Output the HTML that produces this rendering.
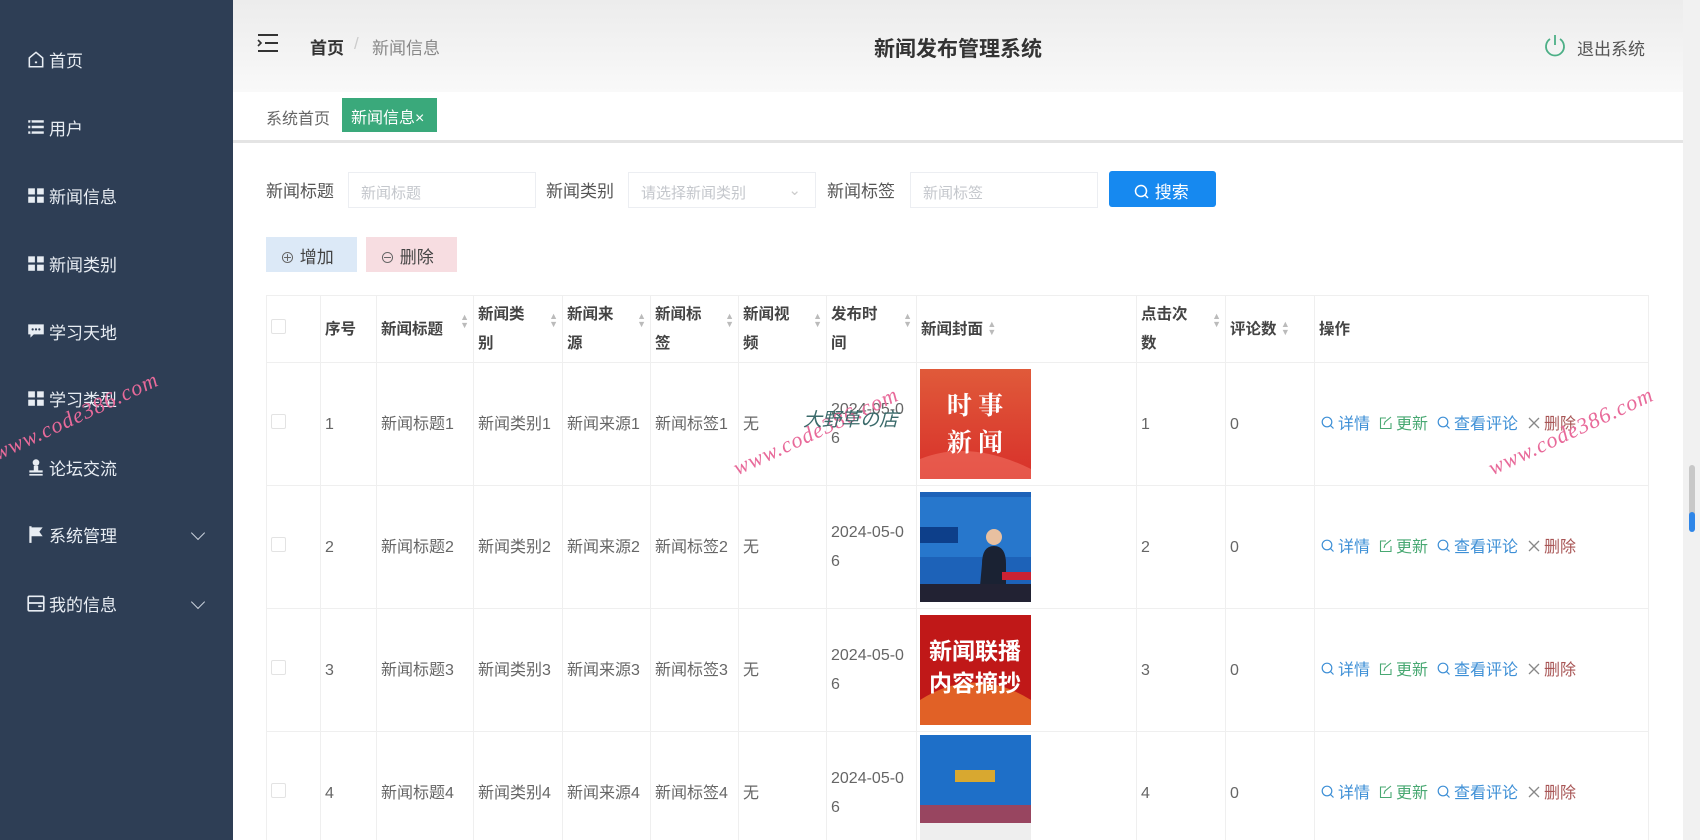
<!DOCTYPE html>
<html><head><meta charset="utf-8"><style>
*{margin:0;padding:0;box-sizing:border-box}
html,body{width:1700px;height:840px;overflow:hidden}
body{background:#fff;font-family:"Liberation Sans","Noto Sans CJK SC",sans-serif;color:#555;position:relative}
.side{position:absolute;left:0;top:0;width:233px;height:840px;background:#2e3e55}
.mi{position:absolute;left:26px;color:#e8edf3;font-size:17px;display:flex;align-items:center;gap:3px;height:24px}
.mi svg{width:20px;height:20px}
.arr{position:absolute;left:193px;width:10px;height:10px;border-right:1.5px solid #c9d1dc;border-bottom:1.5px solid #c9d1dc;transform:rotate(45deg)}
.head{position:absolute;left:233px;top:0;width:1450px;height:92px;background:linear-gradient(#ececec,#f9f9f9)}
.tabs{position:absolute;left:233px;top:92px;width:1450px;height:51px;background:#fff;border-bottom:3px solid #e4e4e4}
.abs{position:absolute}
.inp{position:absolute;top:172px;height:36px;border:1px solid #eceef2;background:#fff;color:#c4c7cc;font-size:15px;padding:9px 12px}
.lbl{position:absolute;top:177px;font-size:17px;color:#555}
table{position:absolute;left:266px;top:295px;border-collapse:collapse;table-layout:fixed;width:1382px}
td,th{border:1px solid #efefef;font-size:16px;padding:0 4px;vertical-align:middle;text-align:left;line-height:29px}
th{font-weight:bold;color:#444;height:67px;font-size:15.5px}
td{height:123px;color:#666}
.srt{float:right;font-size:9px;color:#bbb;line-height:8px;margin-top:-2px;display:inline-block}
.cb{width:15px;height:15px;border:1px solid #e3e3e3;border-radius:2px;display:inline-block}
.img{width:111px;height:110px;display:block;margin-left:-1px}
.op{font-size:16px;white-space:nowrap;padding-left:6px}
.op span{margin-right:9px}
.op svg{vertical-align:-1px;margin-right:3px}
.wm{position:absolute;color:#e86a9a;font-family:"Liberation Serif",serif;font-size:22px;font-style:italic;transform:rotate(-25deg);transform-origin:left bottom;letter-spacing:1px}
</style></head><body>
<div class="side">
 <div class="mi" style="top:47px"><svg viewBox="0 0 18 18"><path d="M3 8L9 3l6 5v8H3z" fill="none" stroke="#e8edf3" stroke-width="1.4"/><path d="M8 12h2" stroke="#e8edf3" stroke-width="1.6"/></svg>首页</div>
 <div class="mi" style="top:115px"><svg viewBox="0 0 18 18"><path d="M2 4h14M2 9h14M2 14h14" stroke="#e8edf3" stroke-width="2.2"/><path d="M4.5 3v12" stroke="#2e3e55" stroke-width="1.2"/></svg>用户</div>
 <div class="mi" style="top:183px"><svg viewBox="0 0 18 18"><rect x="2" y="3" width="6" height="5.5" fill="#e8edf3"/><rect x="10" y="3" width="6" height="5.5" fill="#e8edf3"/><rect x="2" y="10.5" width="6" height="5.5" fill="#e8edf3"/><rect x="10" y="10.5" width="6" height="5.5" fill="#e8edf3"/></svg>新闻信息</div>
 <div class="mi" style="top:251px"><svg viewBox="0 0 18 18"><rect x="2" y="3" width="6" height="5.5" fill="#e8edf3"/><rect x="10" y="3" width="6" height="5.5" fill="#e8edf3"/><rect x="2" y="10.5" width="6" height="5.5" fill="#e8edf3"/><rect x="10" y="10.5" width="6" height="5.5" fill="#e8edf3"/></svg>新闻类别</div>
 <div class="mi" style="top:319px"><svg viewBox="0 0 18 18"><path d="M2 3h14v9H7l-3 3v-3H2z" fill="#e8edf3"/><circle cx="6" cy="7.5" r="1" fill="#2e3e55"/><circle cx="9" cy="7.5" r="1" fill="#2e3e55"/><circle cx="12" cy="7.5" r="1" fill="#2e3e55"/></svg>学习天地</div>
 <div class="mi" style="top:386px"><svg viewBox="0 0 18 18"><rect x="2" y="3" width="6" height="5.5" fill="#e8edf3"/><rect x="10" y="3" width="6" height="5.5" fill="#e8edf3"/><rect x="2" y="10.5" width="6" height="5.5" fill="#e8edf3"/><rect x="10" y="10.5" width="6" height="5.5" fill="#e8edf3"/></svg>学习类型</div>
 <div class="mi" style="top:455px"><svg viewBox="0 0 18 18"><circle cx="9" cy="5" r="3" fill="#e8edf3"/><path d="M7 8h4v4h4v2H3v-2h4z" fill="#e8edf3"/><path d="M3 16h12" stroke="#e8edf3" stroke-width="1.5"/></svg>论坛交流</div>
 <div class="mi" style="top:522px"><svg viewBox="0 0 18 18"><path d="M4 2v15" stroke="#e8edf3" stroke-width="2"/><path d="M4 3h11l-3 4 3 4H4z" fill="#e8edf3"/></svg>系统管理</div>
 <div class="arr" style="top:528px"></div>
 <div class="mi" style="top:591px"><svg viewBox="0 0 18 18"><rect x="2" y="3" width="14" height="13" rx="1" fill="none" stroke="#e8edf3" stroke-width="1.5"/><path d="M2 9h14M11 12h3" stroke="#e8edf3" stroke-width="1.5"/></svg>我的信息</div>
 <div class="arr" style="top:597px"></div>
</div>
<div class="head">
 <svg class="abs" style="left:24px;top:33px" width="22" height="20" viewBox="0 0 22 20"><path d="M1 2h20M8 10h13M1 18h20" stroke="#333" stroke-width="2"/><path d="M1 7l3 3-3 3" fill="none" stroke="#333" stroke-width="1.6"/></svg>
 <div class="abs" style="left:77px;top:34px;font-size:17px;font-weight:bold;color:#333">首页</div>
 <div class="abs" style="left:121px;top:34px;font-size:17px;color:#ccc">/</div>
 <div class="abs" style="left:139px;top:34px;font-size:17px;color:#888">新闻信息</div>
 <div class="abs" style="left:641px;top:33px;font-size:21px;font-weight:bold;color:#333">新闻发布管理系统</div>
 <svg class="abs" style="left:1310px;top:33px" width="24" height="26" viewBox="0 0 24 26"><path d="M7 6a9 9 0 1 0 10 0" fill="none" stroke="#4caf86" stroke-width="1.8"/><path d="M12 2v10" stroke="#4caf86" stroke-width="1.8"/></svg>
 <div class="abs" style="left:1344px;top:35px;font-size:17px;color:#555">退出系统</div>
</div>
<div class="tabs">
 <div class="abs" style="left:33px;top:13px;font-size:16px;color:#666">系统首页</div>
 <div class="abs" style="left:109px;top:6px;width:95px;height:34px;background:#3aa97b;color:#fff;font-size:16px;padding:6px 9px">新闻信息×</div>
</div>
<div class="lbl" style="left:266px">新闻标题</div>
<div class="inp" style="left:348px;width:188px">新闻标题</div>
<div class="lbl" style="left:546px">新闻类别</div>
<div class="inp" style="left:628px;width:188px">请选择新闻类别<span style="position:absolute;right:14px;top:8px;color:#ccc">⌄</span></div>
<div class="lbl" style="left:827px">新闻标签</div>
<div class="inp" style="left:910px;width:188px">新闻标签</div>
<div class="abs" style="left:1109px;top:171px;width:107px;height:36px;background:#1689f0;border-radius:3px;color:#fff;font-size:17px;padding:7px 0 0 25px"><svg style="vertical-align:-2px" width="16" height="16" viewBox="0 0 16 16"><circle cx="7" cy="7" r="5.5" fill="none" stroke="#fff" stroke-width="1.5"/><path d="M11 11l3 3" stroke="#fff" stroke-width="1.5"/></svg> 搜索</div>
<div class="abs" style="left:266px;top:237px;width:91px;height:35px;background:#dce9f7;color:#444;font-size:17px;padding:6px 0 0 14px"><span style="font-size:15px;color:#666">⊕</span> 增加</div>
<div class="abs" style="left:366px;top:237px;width:91px;height:35px;background:#f7dde1;color:#444;font-size:17px;padding:6px 0 0 14px"><span style="font-size:15px;color:#666">⊖</span> 删除</div>
<table>
<colgroup><col style="width:54px"><col style="width:56px"><col style="width:97px"><col style="width:89px"><col style="width:88px"><col style="width:88px"><col style="width:88px"><col style="width:90px"><col style="width:220px"><col style="width:89px"><col style="width:89px"><col style="width:334px"></colgroup>
<tr><th><span class="cb"></span></th><th>序号</th><th>新闻标题<span class="srt">▲<br>▼</span></th><th>新闻类<span class="srt" style="margin-top:12px">▲<br>▼</span><br>别</th><th>新闻来<span class="srt" style="margin-top:12px">▲<br>▼</span><br>源</th><th>新闻标<span class="srt" style="margin-top:12px">▲<br>▼</span><br>签</th><th>新闻视<span class="srt" style="margin-top:12px">▲<br>▼</span><br>频</th><th>发布时<span class="srt" style="margin-top:12px">▲<br>▼</span><br>间</th><th>新闻封面 <span class="srt" style="float:none;display:inline-block;vertical-align:middle">▲<br>▼</span></th><th>点击次<span class="srt" style="margin-top:12px">▲<br>▼</span><br>数</th><th>评论数 <span class="srt" style="float:none;display:inline-block;vertical-align:middle">▲<br>▼</span></th><th>操作</th></tr>
<tr><td><span class="cb"></span></td><td>1</td><td>新闻标题1</td><td>新闻类别1</td><td>新闻来源1</td><td>新闻标签1</td><td>无</td><td>2024-05-0<br>6</td><td><svg class="img" viewBox="0 0 111 110"><defs><linearGradient id="g1" x1="0" y1="0" x2="0" y2="1"><stop offset="0" stop-color="#e05a3a"/><stop offset="1" stop-color="#d8302a"/></linearGradient></defs><rect width="111" height="110" fill="url(#g1)"/><path d="M0 90q50-20 111 10v10H0z" fill="#f07060" opacity=".6"/><text x="55" y="45" fill="#fff" font-size="25" font-weight="bold" text-anchor="middle" font-family="Noto Serif CJK SC,serif">时 事</text><text x="55" y="82" fill="#fff" font-size="25" font-weight="bold" text-anchor="middle" font-family="Noto Serif CJK SC,serif">新 闻</text></svg></td><td>1</td><td>0</td>
<td class="op"><span style="color:#3d8fd6"><svg width="14" height="14" viewBox="0 0 14 14"><circle cx="6" cy="6" r="4.8" fill="none" stroke="#3d8fd6" stroke-width="1.2"/><path d="M9.5 9.5l3 3" stroke="#3d8fd6" stroke-width="1.2"/></svg>详情</span><span style="color:#48a872"><svg width="14" height="14" viewBox="0 0 14 14"><path d="M12 7v5.5H1.5V2H7" fill="none" stroke="#48a872" stroke-width="1.1"/><path d="M5 9l1-3 6-5" fill="none" stroke="#48a872" stroke-width="1.1"/></svg>更新</span><span style="color:#3d8fd6"><svg width="14" height="14" viewBox="0 0 14 14"><circle cx="6" cy="6" r="4.8" fill="none" stroke="#3d8fd6" stroke-width="1.2"/><path d="M9.5 9.5l3 3" stroke="#3d8fd6" stroke-width="1.2"/></svg>查看评论</span><span style="color:#a85555"><svg width="14" height="14" viewBox="0 0 14 14"><path d="M2 2l10 10M12 2L2 12" stroke="#888" stroke-width="1.3"/></svg>删除</span></td></tr>
<tr><td><span class="cb"></span></td><td>2</td><td>新闻标题2</td><td>新闻类别2</td><td>新闻来源2</td><td>新闻标签2</td><td>无</td><td>2024-05-0<br>6</td><td><svg class="img" viewBox="0 0 111 110"><rect width="111" height="110" fill="#1d62b8"/><rect y="5" width="111" height="60" fill="#2f86d8" opacity=".6"/><rect x="0" y="35" width="38" height="16" fill="#0d3f8a"/><path d="M62 72q0-18 12-18t12 18v22H60z" fill="#1a2233"/><circle cx="74" cy="45" r="8" fill="#e8c0a0"/><rect x="0" y="92" width="111" height="18" fill="#223"/><rect x="82" y="80" width="29" height="8" fill="#c23"/></svg></td><td>2</td><td>0</td>
<td class="op"><span style="color:#3d8fd6"><svg width="14" height="14" viewBox="0 0 14 14"><circle cx="6" cy="6" r="4.8" fill="none" stroke="#3d8fd6" stroke-width="1.2"/><path d="M9.5 9.5l3 3" stroke="#3d8fd6" stroke-width="1.2"/></svg>详情</span><span style="color:#48a872"><svg width="14" height="14" viewBox="0 0 14 14"><path d="M12 7v5.5H1.5V2H7" fill="none" stroke="#48a872" stroke-width="1.1"/><path d="M5 9l1-3 6-5" fill="none" stroke="#48a872" stroke-width="1.1"/></svg>更新</span><span style="color:#3d8fd6"><svg width="14" height="14" viewBox="0 0 14 14"><circle cx="6" cy="6" r="4.8" fill="none" stroke="#3d8fd6" stroke-width="1.2"/><path d="M9.5 9.5l3 3" stroke="#3d8fd6" stroke-width="1.2"/></svg>查看评论</span><span style="color:#a85555"><svg width="14" height="14" viewBox="0 0 14 14"><path d="M2 2l10 10M12 2L2 12" stroke="#888" stroke-width="1.3"/></svg>删除</span></td></tr>
<tr><td><span class="cb"></span></td><td>3</td><td>新闻标题3</td><td>新闻类别3</td><td>新闻来源3</td><td>新闻标签3</td><td>无</td><td>2024-05-0<br>6</td><td><svg class="img" viewBox="0 0 111 110"><rect width="111" height="110" fill="#c01818"/><path d="M0 85q55-35 111 0v25H0z" fill="#e8742a" opacity=".8"/><text x="55" y="44" fill="#fff" font-size="23" font-weight="bold" text-anchor="middle">新闻联播</text><text x="55" y="76" fill="#fff" font-size="23" font-weight="bold" text-anchor="middle">内容摘抄</text></svg></td><td>3</td><td>0</td>
<td class="op"><span style="color:#3d8fd6"><svg width="14" height="14" viewBox="0 0 14 14"><circle cx="6" cy="6" r="4.8" fill="none" stroke="#3d8fd6" stroke-width="1.2"/><path d="M9.5 9.5l3 3" stroke="#3d8fd6" stroke-width="1.2"/></svg>详情</span><span style="color:#48a872"><svg width="14" height="14" viewBox="0 0 14 14"><path d="M12 7v5.5H1.5V2H7" fill="none" stroke="#48a872" stroke-width="1.1"/><path d="M5 9l1-3 6-5" fill="none" stroke="#48a872" stroke-width="1.1"/></svg>更新</span><span style="color:#3d8fd6"><svg width="14" height="14" viewBox="0 0 14 14"><circle cx="6" cy="6" r="4.8" fill="none" stroke="#3d8fd6" stroke-width="1.2"/><path d="M9.5 9.5l3 3" stroke="#3d8fd6" stroke-width="1.2"/></svg>查看评论</span><span style="color:#a85555"><svg width="14" height="14" viewBox="0 0 14 14"><path d="M2 2l10 10M12 2L2 12" stroke="#888" stroke-width="1.3"/></svg>删除</span></td></tr>
<tr><td><span class="cb"></span></td><td>4</td><td>新闻标题4</td><td>新闻类别4</td><td>新闻来源4</td><td>新闻标签4</td><td>无</td><td>2024-05-0<br>6</td><td style="vertical-align:top;padding-top:3px"><svg class="img" viewBox="0 0 111 110"><rect width="111" height="110" fill="#1e6fc8"/><rect y="70" width="111" height="20" fill="#c33" opacity=".7"/><rect y="88" width="111" height="22" fill="#eee"/><rect x="35" y="35" width="40" height="12" fill="#d8a830"/></svg></td><td>4</td><td>0</td>
<td class="op"><span style="color:#3d8fd6"><svg width="14" height="14" viewBox="0 0 14 14"><circle cx="6" cy="6" r="4.8" fill="none" stroke="#3d8fd6" stroke-width="1.2"/><path d="M9.5 9.5l3 3" stroke="#3d8fd6" stroke-width="1.2"/></svg>详情</span><span style="color:#48a872"><svg width="14" height="14" viewBox="0 0 14 14"><path d="M12 7v5.5H1.5V2H7" fill="none" stroke="#48a872" stroke-width="1.1"/><path d="M5 9l1-3 6-5" fill="none" stroke="#48a872" stroke-width="1.1"/></svg>更新</span><span style="color:#3d8fd6"><svg width="14" height="14" viewBox="0 0 14 14"><circle cx="6" cy="6" r="4.8" fill="none" stroke="#3d8fd6" stroke-width="1.2"/><path d="M9.5 9.5l3 3" stroke="#3d8fd6" stroke-width="1.2"/></svg>查看评论</span><span style="color:#a85555"><svg width="14" height="14" viewBox="0 0 14 14"><path d="M2 2l10 10M12 2L2 12" stroke="#888" stroke-width="1.3"/></svg>删除</span></td></tr>
</table>
<div class="abs" style="left:1683px;top:0;width:17px;height:840px;background:#f1f1f1"></div>
<div class="abs" style="left:1689px;top:465px;width:6px;height:60px;background:#c8c8c8;border-radius:3px"></div>
<div class="abs" style="left:1689px;top:512px;width:6px;height:20px;background:#2f86e8;border-radius:3px"></div>
<div class="wm" style="left:0;top:440px">www.code386.com</div>
<div class="wm" style="left:740px;top:455px">www.code386.com</div>
<div class="wm" style="left:1495px;top:455px">www.code386.com</div>
<div class="abs" style="left:803px;top:405px;font-size:19px;font-style:italic;color:#3a6a6a">大野草の店</div>
</body></html>
